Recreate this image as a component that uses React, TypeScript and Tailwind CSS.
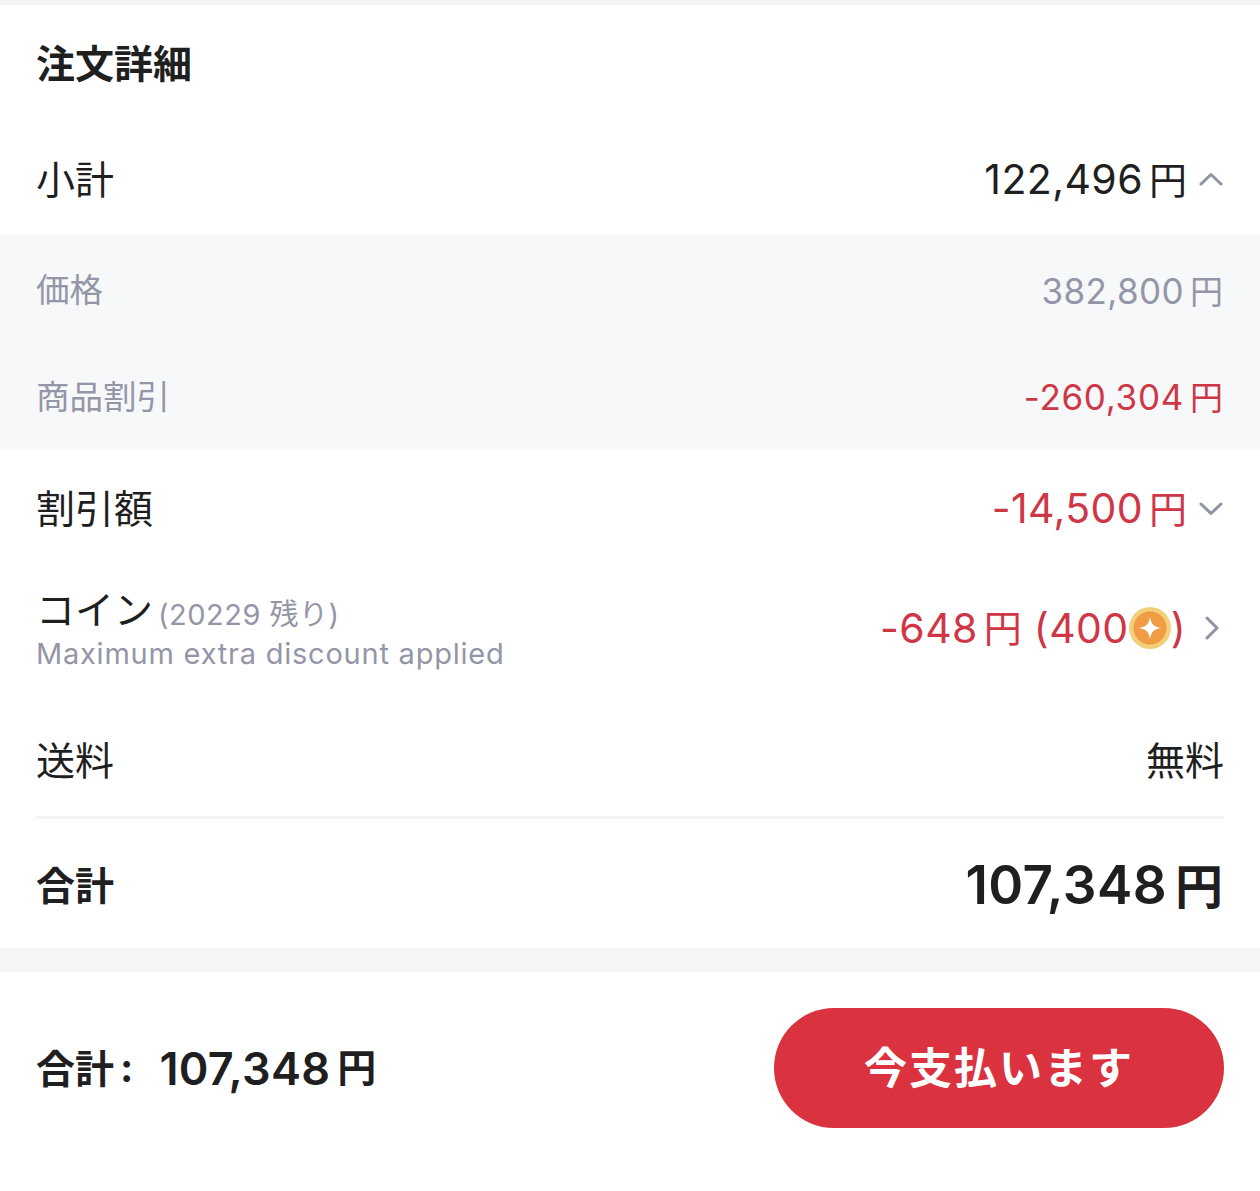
const FONT = "font-['Inter','Noto_Sans_CJK_JP',sans-serif]";

function Chevron({ dir }: { dir: "up" | "down" | "right" }) {
  const d =
    dir === "up"
      ? "M2 13 L12 3.5 L22 13"
      : dir === "down"
        ? "M2 3 L12 12.5 L22 3"
        : "M3 2 L13 12 L3 22";
  const size = dir === "right" ? "w-4 h-6" : "w-6 h-4";
  const vb = dir === "right" ? "0 0 16 24" : "0 0 24 16";
  return (
    <svg viewBox={vb} className={size} fill="none" stroke="#8f93a3" strokeWidth="3" strokeLinecap="round" strokeLinejoin="round">
      <path d={d} />
    </svg>
  );
}

function Coin() {
  return (
    <svg viewBox="0 0 42 42" className="w-[42px] h-[42px] shrink-0">
      <circle cx="21" cy="21" r="21" fill="#f2cf78" />
      <circle cx="21" cy="21" r="16.5" fill="#f09c45" />
      <path d="M21 10 C22 17 25 20 32 21 C25 22 22 25 21 32 C20 25 17 22 10 21 C17 20 20 17 21 10 Z" fill="#fff" />
    </svg>
  );
}

export default function App() {
  return (
    <div className={`${FONT} w-[1260px] h-[1191px] bg-white text-[#1f1f1f] flex flex-col`}>
      <div className="h-[5px] bg-[#f5f5f5]" />
      <div className="h-[120px] px-9 flex items-center">
        <h1 className="text-[39px] font-bold leading-none -mt-[3px]">注文詳細</h1>
      </div>
      <div className="h-[110px] px-9 pb-[2px] flex items-center justify-between">
        <span className="text-[39px] leading-none">小計</span>
        <div className="flex items-center gap-3 mr-[1px]">
          <span className="text-[41px] tracking-[0.4px] leading-none">122,496<span className="text-[38px] ml-[6px] tracking-normal">円</span></span>
          <Chevron dir="up" />
        </div>
      </div>
      <div className="bg-[#f7f8fa] text-[#9496a7]">
        <div className="h-[107px] px-9 pt-[5px] flex items-center justify-between">
          <span className="text-[33.5px] leading-none">価格</span>
          <span className="text-[35px] tracking-[0.4px] leading-none mr-[1px]">382,800<span className="text-[33px] ml-[6px] tracking-normal">円</span></span>
        </div>
        <div className="h-[107px] px-9 pt-[4px] flex items-center justify-between">
          <span className="text-[33.5px] leading-none">商品割引</span>
          <span className="text-[35px] tracking-[0.7px] leading-none text-[#cf3646] mr-[1px]">-260,304<span className="text-[33px] ml-[6px] tracking-normal">円</span></span>
        </div>
      </div>
      <div className="h-[119px] px-9 flex items-center justify-between">
        <span className="text-[39px] leading-none">割引額</span>
        <div className="flex items-center gap-3 mr-[1px]">
          <span className="text-[41px] tracking-[0.4px] leading-none text-[#cf3646]">-14,500<span className="text-[38px] ml-[6px] tracking-normal">円</span></span>
          <Chevron dir="down" />
        </div>
      </div>
      <div className="h-[136px] px-9 pb-[16px] flex items-center justify-between">
        <div className="flex flex-col mt-[3px]">
          <div className="flex items-baseline h-[49px]">
            <span className="text-[39px] leading-none">コイン</span>
            <span className="text-[29px] leading-none text-[#9496a7] tracking-[0.5px] ml-[5px] translate-y-[1px]">(20229 残り)</span>
          </div>
          <span className="text-[29px] leading-[33px] -mt-[2px] text-[#9496a7] tracking-[0.77px]">Maximum extra discount applied</span>
        </div>
        <div className="flex items-center gap-[18px] mr-[4px]">
          <span className="text-[41px] tracking-[0.4px] leading-none text-[#cf3646] flex items-center">
            -648<span className="text-[38px] ml-[6px] tracking-normal">円</span>
            <span className="ml-[12px]">(400</span>
            <Coin />
            <span>)</span>
          </span>
          <Chevron dir="right" />
        </div>
      </div>
      <div className="h-[115px] mx-9 flex items-center justify-between border-b-[3px] border-[#f3f3f5]">
        <span className="text-[39px] leading-none">送料</span>
        <span className="text-[39px] leading-none">無料</span>
      </div>
      <div className="h-[129px] px-9 pt-[3px] flex items-center justify-between">
        <span className="text-[39px] font-bold leading-none">合計</span>
        <span className="text-[53px] tracking-[0.4px] font-semibold leading-none mr-[1px]">107,348<span className="text-[48px] font-bold ml-[8px] tracking-normal">円</span></span>
      </div>
      <div className="h-[24px] bg-[#f5f5f5]" />
      <div className="flex-1 px-9 pt-9 flex items-start justify-between">
        <div className="h-[120px] flex items-center font-semibold leading-none">
          <span className="text-[39px] font-bold">合計</span>
          <span className="text-[40px] font-bold ml-[6px]">:</span>
          <span className="text-[45px] tracking-[0.3px] ml-[26px]">107,348</span>
          <span className="text-[39px] font-bold ml-[7px] -mt-[2px]">円</span>
        </div>
        <button className="w-[450px] h-[120px] rounded-[60px] bg-[#db3240] text-white text-[43px] font-semibold leading-none tracking-[2px]">今支払います</button>
      </div>
    </div>
  );
}
